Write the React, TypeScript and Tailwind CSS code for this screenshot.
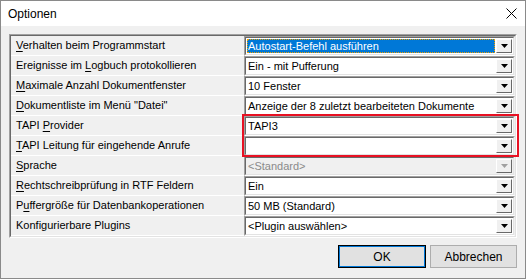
import type { FC, ReactNode } from "react";

type Row = {
  label: ReactNode;
  value: string;
  selected?: boolean;
  disabled?: boolean;
};

const u = (s: string) => <span className="underline underline-offset-[2px]">{s}</span>;

const rows: Row[] = [
  { label: <>{u("V")}erhalten beim Programmstart</>, value: "Autostart-Befehl ausführen", selected: true },
  { label: <>Ereignisse im {u("L")}ogbuch protokollieren</>, value: "Ein - mit Pufferung" },
  { label: <>{u("M")}aximale Anzahl Dokumentfenster</>, value: "10 Fenster" },
  { label: <>{u("D")}okumentliste im Menü "Datei"</>, value: "Anzeige der 8 zuletzt bearbeiteten Dokumente" },
  { label: <>TAPI {u("P")}rovider</>, value: "TAPI3" },
  { label: <>{u("T")}API Leitung für eingehende Anrufe</>, value: "" },
  { label: <>{u("S")}prache</>, value: "<Standard>", disabled: true },
  { label: <>{u("R")}echtschreibprüfung in RTF Feldern</>, value: "Ein" },
  { label: <>P{u("u")}ffergröße für Datenbankoperationen</>, value: "50 MB (Standard)" },
  { label: <>Konfigurierbare Plugins</>, value: "<Plugin auswählen>" },
];

const Arrow: FC<{ disabled?: boolean }> = ({ disabled }) => (
  <div className="flex h-full w-[16px] items-center justify-center border border-t-white border-l-white border-r-[#696969] border-b-[#696969] bg-[#f0f0f0]">
    <svg width="7" height="4" viewBox="0 0 7 4">
      <path d="M0 0h7L3.5 4z" fill={disabled ? "#a0a0a0" : "#000"} />
    </svg>
  </div>
);

const Combo: FC<{ row: Row }> = ({ row }) => (
  <div className="h-[20px] border border-t-[#a0a0a0] border-l-[#a0a0a0] border-r-[#f0f0f0] border-b-white">
    <div
      className={`flex h-full items-stretch gap-[1px] border border-t-[#696969] border-l-[#696969] border-r-[#e3e3e3] border-b-[#e3e3e3] p-[1px] ${
        row.disabled ? "bg-[#f0f0f0]" : "bg-white"
      }`}
    >
      <div
        className={`flex flex-1 items-center px-[1px] leading-none whitespace-nowrap ${
          row.selected ? "bg-[#0078d7] text-white outline-1 outline-dotted outline-[#f0a000] -outline-offset-1" : ""
        } ${row.disabled ? "text-[#8a8a8a]" : ""}`}
      >
        <span>{row.value}</span>
      </div>
      <Arrow disabled={row.disabled} />
    </div>
  </div>
);

const App: FC = () => {
  return (
    <div className="relative flex h-[279px] w-[526px] flex-col border border-[#8a8a8a] bg-[#f0f0f0] font-['Liberation_Sans',sans-serif] text-[11px] text-black">
      <div className="flex h-[25px] items-center justify-between bg-white pl-[7px] pr-[8px]">
        <span className="text-[12px] text-black">Optionen</span>
        <svg width="11" height="11" viewBox="0 0 11 11" className="mb-[1px]">
          <path d="M0.5 0.5l10 10M10.5 0.5l-10 10" stroke="#000" strokeWidth="1" />
        </svg>
      </div>

      <div className="px-[8px] pt-[8px]">
        <div className="border border-t-[#a0a0a0] border-l-[#a0a0a0] border-r-white border-b-white">
          <div className="grid grid-cols-[233px_1fr] border border-t-[#696969] border-l-[#696969] border-r-[#e3e3e3] border-b-[#e3e3e3] bg-[#f0f0f0]">
            {rows.map((row, i) => (
              <div key={i} className="contents">
                <div className="flex h-[20px] items-center border-b border-b-white pl-[5px] whitespace-nowrap">
                  <span>{row.label}</span>
                </div>
                <Combo row={row} />
              </div>
            ))}
          </div>
        </div>
      </div>

      <div className="mt-[7px] flex justify-end gap-[4px] pr-[8px]">
        <button className="h-[23px] w-[88px] border border-black bg-[#e1e1e1] text-[12px] shadow-[inset_0_0_0_1px_#0078d7]">
          OK
        </button>
        <button className="h-[23px] w-[87px] border border-[#adadad] bg-[#e1e1e1] text-[12px]">Abbrechen</button>
      </div>

      <div className="pointer-events-none absolute left-[241px] top-[113px] h-[43px] w-[277px] border-2 border-[#e81123]" />
    </div>
  );
};

export default App;
